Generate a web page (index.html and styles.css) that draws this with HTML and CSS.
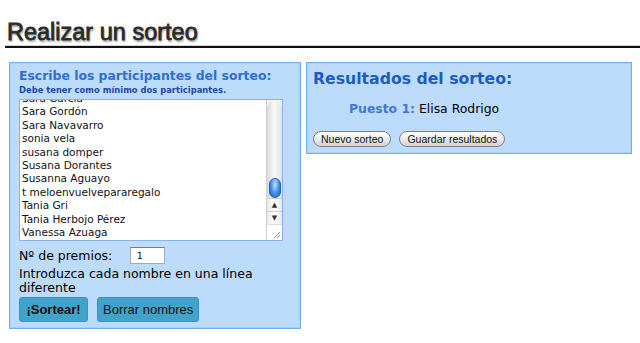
FILE: index.html
```html
<!DOCTYPE html>
<html lang="es">
<head>
  <meta charset="UTF-8" />
  <meta name="viewport" content="width=device-width, initial-scale=1.0"/>
  <title>Realizar un sorteo</title>
  <link rel="stylesheet" href="styles.css">
</head>
<body>
  <h1 class="page-title">Realizar un sorteo</h1>

  <div class="panels">
    <!-- Participantes -->
    <div class="panel panel-form">
      <div class="panel-heading">Escribe los participantes del sorteo:</div>
      <div class="panel-note">Debe tener como mínimo dos participantes.</div>

      <div class="names-box">
        <div class="names-list">
          <div>Sara García</div>
          <div>Sara Gordón</div>
          <div>Sara Navavarro</div>
          <div>sonia vela</div>
          <div>susana domper</div>
          <div>Susana Dorantes</div>
          <div>Susanna Aguayo</div>
          <div>t meloenvuelvepararegalo</div>
          <div>Tania Gri</div>
          <div>Tania Herbojo Pérez</div>
          <div>Vanessa Azuaga</div>
        </div>
        <div class="scrollbar">
          <div class="track"><div class="thumb"></div></div>
          <div class="arrow">&#9650;</div>
          <div class="arrow">&#9660;</div>
          <div class="grip">
            <svg width="15" height="15" viewBox="0 0 15 15">
              <path d="M13 7 L7 13 M13 10 L10 13" stroke="#999" stroke-width="1" />
            </svg>
          </div>
        </div>
      </div>

      <div class="prize-row">
        <span class="prize-label">Nº de premios:</span>
        <input class="prize-input" type="text" value="1">
      </div>
      <p class="hint">Introduzca cada nombre en una línea diferente</p>

      <div class="actions">
        <button class="btn btn-main">¡Sortear!</button>
        <button class="btn">Borrar nombres</button>
      </div>
    </div>

    <!-- Resultados -->
    <div class="panel panel-result">
      <div class="result-heading">Resultados del sorteo:</div>
      <div class="result-line"><span class="result-place">Puesto 1:</span> Elisa Rodrigo</div>
      <div class="result-actions">
        <button class="pill-btn">Nuevo sorteo</button>
        <button class="pill-btn">Guardar resultados</button>
      </div>
    </div>
  </div>
</body>
</html>
```

FILE: styles.css
```css
body {
  margin: 0;
  padding: 0;
  background: #fff;
  font-family: "DejaVu Sans", Verdana, sans-serif;
  color: #000;
}

.page-title {
  margin: 18px 0 0 5px;
  padding: 0 0 0 2px;
  font-family: "Liberation Sans", Arial, sans-serif;
  font-size: 23.5px;
  font-weight: normal;
  line-height: 28px;
  color: #2a2a2a;
  -webkit-text-stroke: 0.8px #2a2a2a;
  text-shadow: 1px 2px 2px #999;
  border-bottom: 2px solid #111;
  box-shadow: inset 0 -1px 0 #d6d6d6;
}

.panels {
  display: flex;
  align-items: flex-start;
  gap: 5px;
  margin-top: 14px;
  padding-left: 9px;
}

.panel {
  box-sizing: border-box;
  background: #bddcfb;
  border: 1px solid #72b0ee;
  box-shadow: inset 0 0 0 1px #a9d0f7;
}

/* Participantes */
.panel-form {
  width: 292px;
  padding: 5px 17px 6px 9px;
}

.panel-heading {
  font-size: 12.4px;
  font-weight: bold;
  line-height: 15px;
  color: #2f6fd0;
}

.panel-note {
  margin-top: 2px;
  font-size: 8.4px;
  font-weight: bold;
  line-height: 11px;
  color: #1b4aa8;
}

.names-box {
  display: flex;
  height: 142px;
  margin-top: 3px;
  box-sizing: border-box;
  background: #fff;
  border: 1px solid #86b4e4;
  overflow: hidden;
}

.names-list {
  flex: 1;
  margin-top: -8px;
  padding-left: 2px;
  font-size: 10.5px;
  line-height: 13.4px;
  color: #111;
}

.scrollbar {
  width: 15px;
  display: flex;
  flex-direction: column;
  border-left: 1px solid #d0d0d0;
  background: #f4f4f4;
}

.track {
  flex: 1;
  display: flex;
  flex-direction: column;
  justify-content: flex-end;
  align-items: center;
  margin-top: 1px;
  border-radius: 7px 7px 0 0;
  background: linear-gradient(to right, #d8d8d8, #fafafa 45%, #e2e2e2);
}

.thumb {
  width: 12px;
  height: 20px;
  border-radius: 6px;
  background: radial-gradient(ellipse at 50% 30%, #bfe3ff, #3d8ee6 55%, #1a5fc0);
  border: 1px solid #2b62aa;
  box-sizing: border-box;
}

.arrow {
  height: 12px;
  font-size: 7px;
  line-height: 12px;
  text-align: center;
  color: #333;
  border-top: 1px solid #cfcfcf;
  background: linear-gradient(to right, #e8e8e8, #fff, #e8e8e8);
}

.grip {
  height: 15px;
  background: #fff;
  border-top: 1px solid #ddd;
}

.grip svg {
  display: block;
}

.prize-row {
  display: flex;
  align-items: center;
  height: 17px;
  margin-top: 6px;
}

.prize-label {
  width: 111px;
  font-size: 12.5px;
}

.prize-input {
  box-sizing: border-box;
  width: 35px;
  height: 17px;
  margin: 0;
  padding: 0 6px;
  border: 1px solid #a8a8a8;
  border-top-color: #7d7d7d;
  font-family: "DejaVu Sans", Verdana, sans-serif;
  font-size: 9px;
  background: #fff;
}

.hint {
  margin: 3px 0 0 0;
  font-size: 12.5px;
  line-height: 14px;
}

.actions {
  display: flex;
  gap: 9px;
  margin-top: 2px;
}

.btn {
  height: 25px;
  padding: 0 5px;
  background: #41a2ca;
  border: 1px solid #3d8cdc;
  border-radius: 3px;
  font-family: "Liberation Sans", Arial, sans-serif;
  font-size: 13px;
  color: #111;
  cursor: pointer;
}

.btn-main {
  width: 69px;
  font-weight: bold;
}

/* Resultados */
.panel-result {
  width: 326px;
  padding: 7px 6px 6px 6px;
}

.result-heading {
  font-size: 15.7px;
  font-weight: bold;
  line-height: 18px;
  color: #1b5cc6;
}

.result-line {
  margin-top: 13px;
  padding-left: 36px;
  font-size: 12.4px;
  line-height: 16px;
}

.result-place {
  font-weight: bold;
  color: #4377d5;
}

.result-actions {
  display: flex;
  gap: 8px;
  margin-top: 14px;
}

.pill-btn {
  height: 16px;
  padding: 0 7px;
  border: 1px solid #808080;
  border-radius: 8px;
  background: linear-gradient(#ffffff, #e6e6e6 60%, #d4d4d4);
  font-family: "Liberation Sans", Arial, sans-serif;
  font-size: 10.5px;
  line-height: 14px;
  color: #111;
  cursor: pointer;
}
```
